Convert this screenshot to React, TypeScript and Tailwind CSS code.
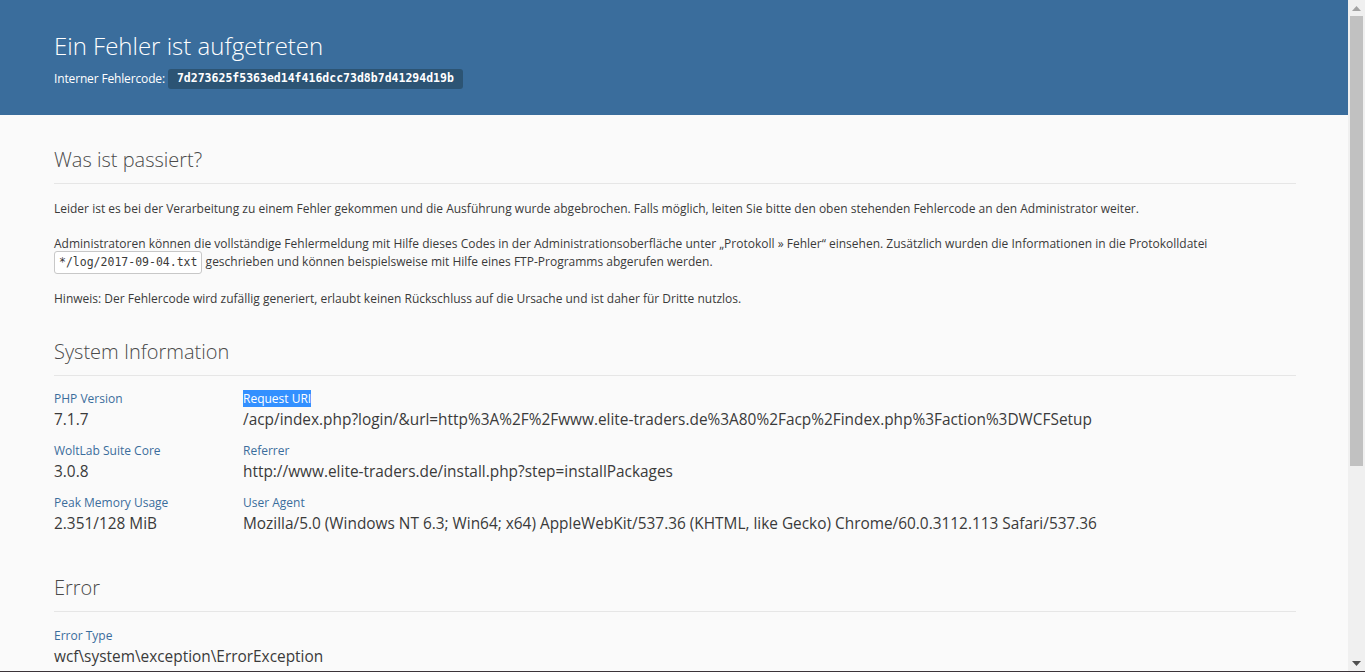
import React from "react";

const font = { fontFamily: '"Open Sans", "Noto Sans", sans-serif' };
const mono = { fontFamily: '"DejaVu Sans Mono", "Liberation Mono", monospace' };

function Section({ title, className, children }: { title: string; className?: string; children: React.ReactNode }) {
  return (
    <section className={className ?? "mt-[30px]"}>
      <h2 className="text-[20px] font-light leading-[30px] text-[#4a4a4a] pb-[8px] border-b border-[#e6e6e6]">{title}</h2>
      <div className="pt-[10px]">{children}</div>
    </section>
  );
}

function Field({ label, value, highlight }: { label: string; value: string; highlight?: boolean }) {
  return (
    <div className="flex flex-col">
      <span className="text-[12px] leading-[18px] text-[#3a6d9c]">
        {highlight ? <span className="bg-[#3390ff] text-white">{label}</span> : label}
      </span>
      <span className="text-[15.4px] leading-[24px] text-[#3a3a3a] whitespace-nowrap">{value}</span>
    </div>
  );
}

export default function App() {
  return (
    <div className="h-[672px] w-full flex overflow-hidden bg-[#fafafa] border-b border-[#3b3339]" style={font}>
      <div className="flex-1 flex flex-col min-w-0">
        <header className="bg-[#3a6d9c] h-[115px] shrink-0 px-[54px] pt-[30px] text-white">
          <h1 className="text-[24px] font-light leading-[32px]">Ein Fehler ist aufgetreten</h1>
          <div className="flex items-center mt-[7px] text-[12px] tracking-[-0.15px]">
            <span>Interner Fehlercode:</span>
            <span
              className="ml-[3px] bg-[#2c5474] rounded-[3px] px-[9px] h-[20px] flex items-center text-[11.5px] font-semibold tracking-normal"
              style={mono}
            >
              7d273625f5363ed14f416dcc73d8b7d41294d19b
            </span>
          </div>
        </header>
        <main className="px-[54px] pr-[52px] text-[12px] leading-[18px] text-[#3a3a3a]">
          <Section title="Was ist passiert?">
            <p className="mt-[6px]">
              Leider ist es bei der Verarbeitung zu einem Fehler gekommen und die Ausführung wurde abgebrochen. Falls möglich, leiten Sie bitte den oben stehenden Fehlercode an den Administrator weiter.
            </p>
            <p className="mt-[17px]">
              Administratoren können die vollständige Fehlermeldung mit Hilfe dieses Codes in der Administrationsoberfläche unter „Protokoll » Fehler“ einsehen. Zusätzlich wurden die Informationen in die Protokolldatei{" "}
              <br />
              <span
                className="inline-block align-middle my-[-3px] border border-[#c8c8c8] rounded-[3px] px-[4px] py-[2px] leading-[17px] text-[11.5px] text-[#3a3a3a] bg-white"
                style={mono}
              >
                */log/2017-09-04.txt
              </span>{" "}
              geschrieben und können beispielsweise mit Hilfe eines FTP-Programms abgerufen werden.
            </p>
            <p className="mt-[19px]">
              Hinweis: Der Fehlercode wird zufällig generiert, erlaubt keinen Rückschluss auf die Ursache und ist daher für Dritte nutzlos.
            </p>
          </Section>
          <Section title="System Information" className="mt-[29px]">
            <div className="grid grid-cols-[189px_1fr] gap-y-[10px] pt-[4px]">
              <Field label="PHP Version" value="7.1.7" />
              <Field label="Request URI" value="/acp/index.php?login/&url=http%3A%2F%2Fwww.elite-traders.de%3A80%2Facp%2Findex.php%3Faction%3DWCFSetup" highlight />
              <Field label="WoltLab Suite Core" value="3.0.8" />
              <Field label="Referrer" value="http://www.elite-traders.de/install.php?step=installPackages" />
              <Field label="Peak Memory Usage" value="2.351/128 MiB" />
              <Field label="User Agent" value="Mozilla/5.0 (Windows NT 6.3; Win64; x64) AppleWebKit/537.36 (KHTML, like Gecko) Chrome/60.0.3112.113 Safari/537.36" />
            </div>
          </Section>
          <Section title="Error" className="mt-[37px]">
            <div className="pt-[5px]">
              <Field label="Error Type" value="wcf\system\exception\ErrorException" />
            </div>
          </Section>
        </main>
      </div>
      {/* scrollbar track */}
      <div className="w-[17px] shrink-0 bg-[#f0f0f0] flex flex-col items-center">
        <div className="h-[16px] shrink-0 flex items-center justify-center">
          <svg width="9" height="5" viewBox="0 0 9 5"><path d="M4.5 0L9 5H0z" fill="#a3a3a3" /></svg>
        </div>
        <div className="w-[13px] h-[450px] shrink-0 bg-[#c1c1c1]" />
        <div className="flex-1" />
        <div className="h-[16px] shrink-0 flex items-center justify-center">
          <svg width="9" height="5" viewBox="0 0 9 5"><path d="M0 0H9L4.5 5z" fill="#505050" /></svg>
        </div>
      </div>
    </div>
  );
}
